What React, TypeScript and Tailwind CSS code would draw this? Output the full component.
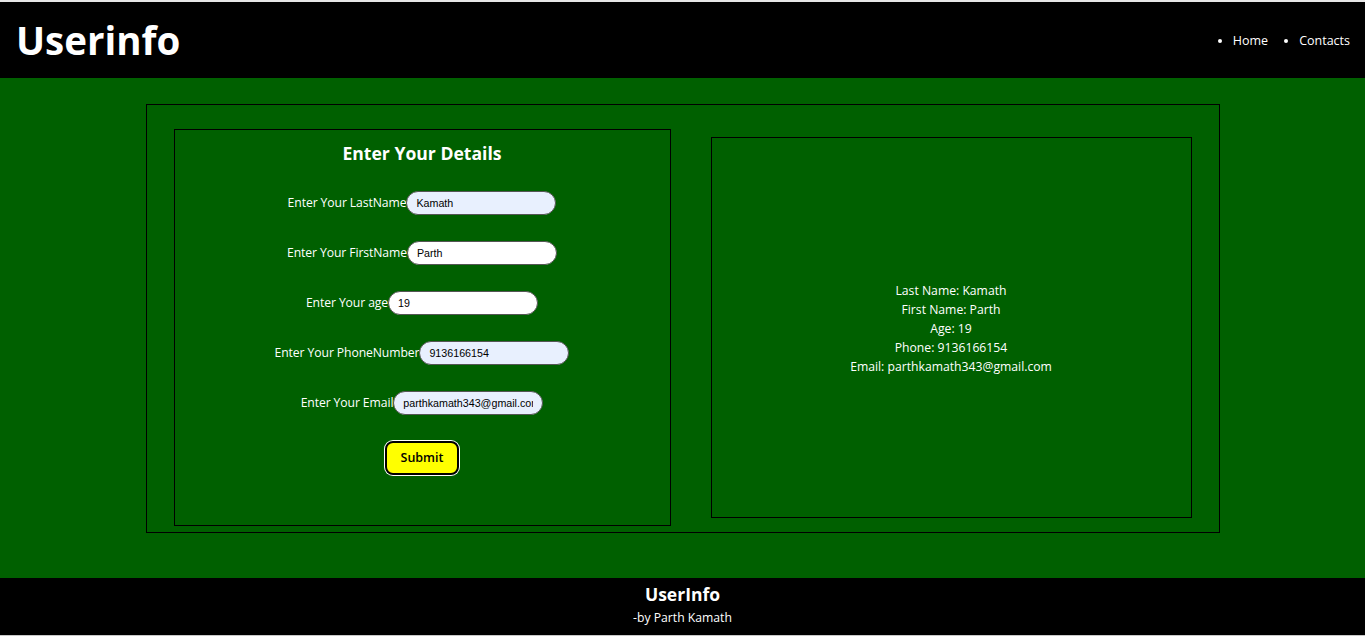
import React from 'react';

const sans = { fontFamily: '"Open Sans", "Noto Sans", sans-serif' };

type Field = { label: string; value: string; filled: boolean };

const fields: Field[] = [
  { label: 'Enter Your LastName', value: 'Kamath', filled: true },
  { label: 'Enter Your FirstName', value: 'Parth', filled: false },
  { label: 'Enter Your age', value: '19', filled: false },
  { label: 'Enter Your PhoneNumber', value: '9136166154', filled: true },
  { label: 'Enter Your Email', value: 'parthkamath343@gmail.com', filled: true },
];

function Header() {
  return (
    <header className="flex h-[76px] items-center justify-between bg-black pl-[16px] pr-[15px] text-white">
      <h1 className="text-[38.5px] font-bold leading-none">Userinfo</h1>
      <ul className="mt-[2px] flex items-center gap-[17px] text-[12.5px]">
        <li className="ml-[14px] list-disc">Home</li>
        <li className="ml-[14px] list-disc">Contacts</li>
      </ul>
    </header>
  );
}

function FormPanel() {
  return (
    <div className="flex h-[397px] w-[497px] shrink-0 flex-col items-center gap-[26px] border border-black pt-[11px] text-white">
      <h2 className="text-[17.6px] font-bold leading-[24px]">Enter Your Details</h2>
      {fields.map((f) => (
        <div key={f.label} className="flex h-[24px] items-center">
          <label className="text-[12.2px] leading-none tracking-[-0.1px]">{f.label}</label>
          <input
            readOnly
            value={f.value}
            className={
              'h-[24px] w-[150px] rounded-full border border-[#555] px-[9px] text-[10.7px] text-black outline-none ' +
              (f.filled ? 'bg-[#e8f0fe]' : 'bg-white')
            }
            style={{ fontFamily: '"Liberation Sans", Arial, sans-serif' }}
          />
        </div>
      ))}
      <button className="h-[34px] w-[74px] rounded-[8px] border-2 border-black bg-[#ffff00] text-[12.5px] font-semibold text-black ring-1 ring-white">
        Submit
      </button>
    </div>
  );
}

function PreviewPanel() {
  return (
    <div className="mt-[8px] flex h-[381px] w-[481px] shrink-0 flex-col items-center justify-center border border-black pt-[2px] text-[12.2px] leading-[19px] text-white">
      <p>Last Name: Kamath</p>
      <p>First Name: Parth</p>
      <p>Age: 19</p>
      <p>Phone: 9136166154</p>
      <p>Email: parthkamath343@gmail.com</p>
    </div>
  );
}

export default function App() {
  return (
    <div className="min-h-[636px] border-t-2 border-b border-t-[#e6e6e6] border-b-[#c8c8c8] bg-black" style={sans}>
      <Header />
      <main className="h-[500px] bg-[#006000] pt-[26px]">
        <div className="mx-auto flex h-[429px] w-[1074px] items-start gap-[40px] border border-black pl-[27px] pt-[24px]">
          <FormPanel />
          <PreviewPanel />
        </div>
      </main>
      <footer className="flex h-[57px] flex-col items-center bg-black pt-[4px] text-white">
        <h3 className="text-[17.5px] font-bold leading-[24px]">UserInfo</h3>
        <p className="mt-[2px] text-[12.2px] leading-[19px]">-by Parth Kamath</p>
      </footer>
    </div>
  );
}
